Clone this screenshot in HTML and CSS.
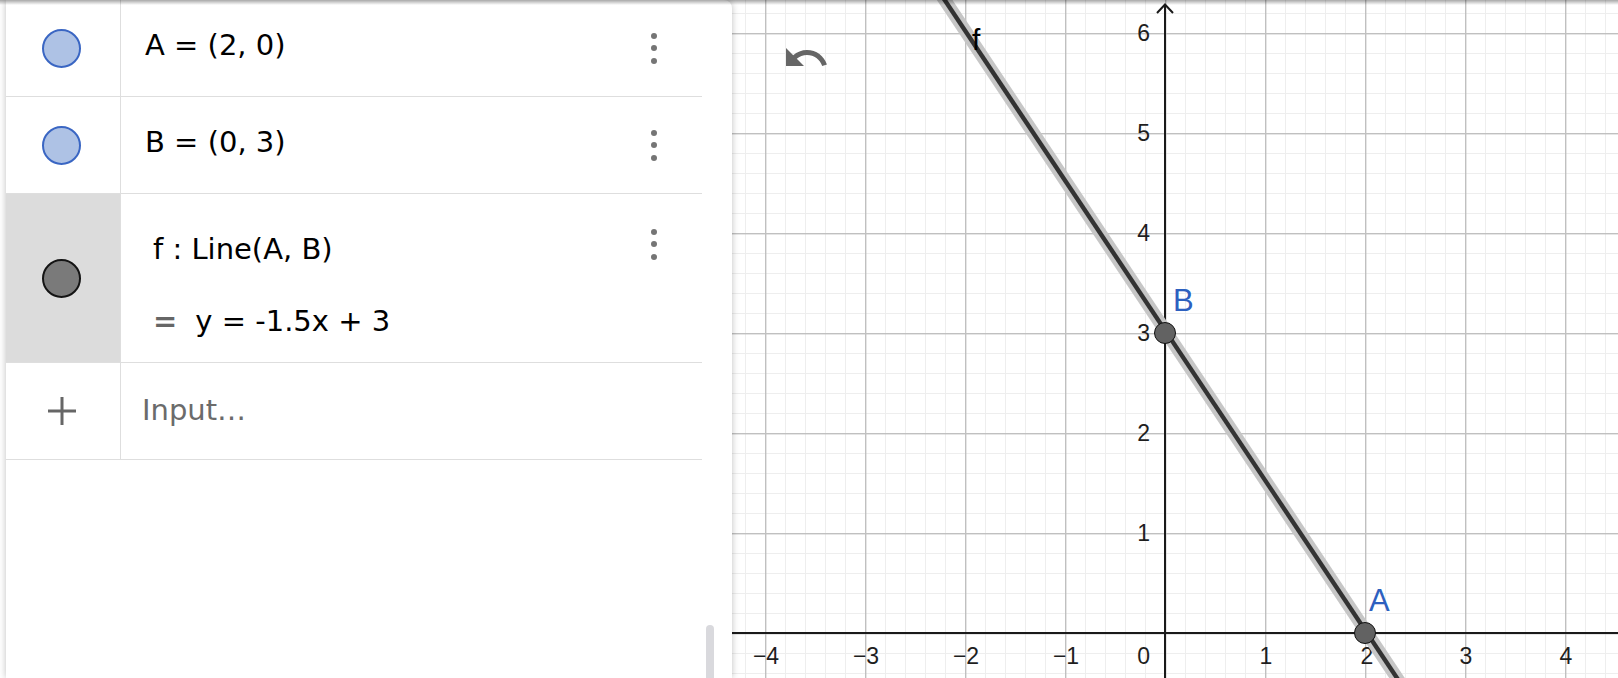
FILE: index.html
```html
<!DOCTYPE html>
<html lang="en">
<head>
<meta charset="utf-8">
<title>GeoGebra</title>
<link rel="stylesheet" href="styles.css">
</head>
<body>
<div class="app">
  <aside class="algebra">
    <div class="av-list">
      <div class="av-row">
        <div class="av-marble"><span class="marble marble-blue"></span></div>
        <div class="av-content">
          <div class="av-text"><div class="math">A = (2, 0)</div></div>
          <button class="av-menu" aria-label="More"><i></i><i></i><i></i></button>
        </div>
      </div>
      <div class="av-row">
        <div class="av-marble"><span class="marble marble-blue"></span></div>
        <div class="av-content">
          <div class="av-text"><div class="math">B = (0, 3)</div></div>
          <button class="av-menu" aria-label="More"><i></i><i></i><i></i></button>
        </div>
      </div>
      <div class="av-row tall selected">
        <div class="av-marble"><span class="marble marble-dark"></span></div>
        <div class="av-content">
          <div class="av-text">
            <div class="math">f : Line(A, B)</div>
            <div class="math output"><span class="out-eq">=</span><span>y = -1.5x + 3</span></div>
          </div>
          <button class="av-menu" aria-label="More"><i></i><i></i><i></i></button>
        </div>
      </div>
      <div class="av-row input-row">
        <div class="av-marble">
          <svg class="plus" width="30" height="30" viewBox="0 0 30 30"><rect x="13.5" y="1" width="3" height="28"/><rect x="1" y="13.5" width="28" height="3"/></svg>
        </div>
        <div class="av-content">
          <div class="av-text"><div class="math placeholder">Input…</div></div>
        </div>
      </div>
    </div>
    <div class="scroll-thumb"></div>
  </aside>
  <main class="graphics">
    <svg class="canvas" width="886" height="678" viewBox="0 0 886 678">
      <defs>
        <pattern id="grid" x="383" y="583" width="100" height="100" patternUnits="userSpaceOnUse">
          <g fill="#eeeeee">
            <rect x="10" y="0" width="1" height="100"/>
            <rect x="30" y="0" width="1" height="100"/>
            <rect x="70" y="0" width="1" height="100"/>
            <rect x="90" y="0" width="1" height="100"/>
            <rect x="0" y="10" width="100" height="1"/>
            <rect x="0" y="30" width="100" height="1"/>
            <rect x="0" y="70" width="100" height="1"/>
            <rect x="0" y="90" width="100" height="1"/>
          </g>
          <g fill="#c0c0c0">
            <rect x="50" y="0" width="1.4" height="100"/>
            <rect x="0" y="50" width="100" height="1.4"/>
          </g>
        </pattern>
      </defs>
      <rect width="886" height="678" fill="url(#grid)"/>
      <rect x="0" y="632" width="886" height="2" fill="#1a1a1a"/>
      <rect x="432" y="5" width="2" height="673" fill="#1a1a1a"/>
      <polyline points="425,13 433,4.5 441,13" fill="none" stroke="#1a1a1a" stroke-width="2"/>
      <g class="ticks">
        <text x="418" y="41" text-anchor="end">6</text>
        <text x="418" y="141" text-anchor="end">5</text>
        <text x="418" y="241" text-anchor="end">4</text>
        <text x="418" y="341" text-anchor="end">3</text>
        <text x="418" y="441" text-anchor="end">2</text>
        <text x="418" y="541" text-anchor="end">1</text>
        <text x="418" y="664" text-anchor="end">0</text>
        <text x="34" y="664" text-anchor="middle">−4</text>
        <text x="134" y="664" text-anchor="middle">−3</text>
        <text x="234" y="664" text-anchor="middle">−2</text>
        <text x="334" y="664" text-anchor="middle">−1</text>
        <text x="534" y="664" text-anchor="middle">1</text>
        <text x="635" y="664" text-anchor="middle">2</text>
        <text x="734" y="664" text-anchor="middle">3</text>
        <text x="834" y="664" text-anchor="middle">4</text>
      </g>
      <line x1="206" y1="-10" x2="673" y2="690" stroke="#c6c6c6" stroke-width="13"/>
      <line x1="206" y1="-10" x2="673" y2="690" stroke="#333333" stroke-width="4.4"/>
      <text class="obj-label" x="240" y="50">f</text>
      <circle cx="433" cy="333" r="10.5" fill="#626262" stroke="#111" stroke-width="1"/>
      <circle cx="633" cy="633" r="10.5" fill="#626262" stroke="#111" stroke-width="1"/>
      <text class="pt-label" x="441" y="311">B</text>
      <text class="pt-label" x="637" y="611">A</text>
    </svg>
    <button class="undo" aria-label="Undo">
      <svg width="48" height="48" viewBox="0 0 24 24"><path d="M12.5 8c-2.65 0-5.05.99-6.9 2.6L2 7v9h9l-3.62-3.62c1.39-1.16 3.16-1.88 5.12-1.88 3.54 0 6.55 2.31 7.6 5.5l2.37-.78C21.08 11.03 17.15 8 12.5 8z"/></svg>
    </button>
  </main>
</div>
</body>
</html>
```

FILE: styles.css
```css
* { box-sizing: border-box; }

html, body {
  margin: 0;
  padding: 0;
}

body {
  width: 1618px;
  height: 678px;
  overflow: hidden;
  background: #ffffff;
  font-family: "DejaVu Sans", "Liberation Sans", sans-serif;
  color: #000;
}

.app {
  position: relative;
  display: flex;
  height: 678px;
}

.app::after {
  content: "";
  position: absolute;
  left: 0;
  right: 0;
  top: 0;
  height: 5px;
  background: linear-gradient(rgba(0, 0, 0, 0.34), rgba(0, 0, 0, 0));
  z-index: 5;
  pointer-events: none;
}

/* Algebra view */
.algebra {
  position: relative;
  z-index: 2;
  flex: none;
  width: 726px;
  margin-left: 6px;
  background: #ffffff;
  border-top-right-radius: 8px;
  box-shadow: 0 0 7px rgba(0, 0, 0, 0.26);
}

.av-list {
  width: 696px;
}

.av-row {
  display: flex;
  height: 97px;
  border-bottom: 1px solid #dedede;
}

.av-row.tall {
  height: 169px;
}

.av-marble {
  flex: none;
  width: 115px;
  border-right: 1px solid #dedede;
  padding-right: 3px;
  display: flex;
  align-items: center;
  justify-content: center;
}

.av-row.selected .av-marble {
  background: #dcdcdc;
}

.marble {
  display: block;
  width: 39px;
  height: 39px;
  border-radius: 50%;
  border: 2px solid;
}

.marble-blue {
  background: #aec2e5;
  border-color: #3a66c3;
}

.marble-dark {
  background: #7a7a7a;
  border-color: #141414;
}

.plus {
  fill: #666666;
}

.av-content {
  flex: 1;
  display: flex;
  align-items: flex-start;
  padding-left: 24px;
}

.av-text {
  flex: 1;
  padding-top: 27px;
}

.math {
  font-size: 29px;
  line-height: 36px;
  white-space: pre;
  color: #000;
}

.av-row.tall .av-text {
  padding-top: 37px;
  padding-left: 8px;
}

.av-row.tall .output {
  margin-top: 36px;
}

.out-eq {
  font-weight: bold;
  color: #666666;
  margin-right: 18px;
}

.input-row .av-text {
  padding-top: 29px;
  margin-left: -3px;
}

.placeholder {
  color: #6b6b6b;
}

.av-menu {
  flex: none;
  width: 48px;
  height: 48px;
  margin: 24px 24px 0 0;
  padding: 0;
  border: 0;
  background: transparent;
  display: flex;
  flex-direction: column;
  align-items: center;
  justify-content: center;
  gap: 6.5px;
}

.av-row.tall .av-menu {
  margin-top: 26px;
}

.av-menu i {
  display: block;
  width: 6px;
  height: 6px;
  border-radius: 50%;
  background: #757575;
}

.scroll-thumb {
  position: absolute;
  left: 700px;
  top: 625px;
  width: 8px;
  height: 70px;
  border-radius: 4px;
  background: #d9d9dd;
}

/* Graphics view */
.graphics {
  position: relative;
  flex: 1;
  height: 678px;
  overflow: hidden;
}

.canvas {
  display: block;
}

.ticks text {
  font-family: "Liberation Sans", Arial, sans-serif;
  font-size: 23px;
  fill: #1e1e1e;
}

.obj-label {
  font-family: "Liberation Sans", Arial, sans-serif;
  font-size: 30px;
  fill: #000;
}

.pt-label {
  font-family: "Liberation Sans", Arial, sans-serif;
  font-size: 31px;
  fill: #2d60bf;
}

.undo {
  position: absolute;
  left: 50px;
  top: 34px;
  width: 48px;
  height: 48px;
  padding: 0;
  border: 0;
  background: transparent;
}

.undo svg {
  display: block;
  fill: #666666;
}
```
